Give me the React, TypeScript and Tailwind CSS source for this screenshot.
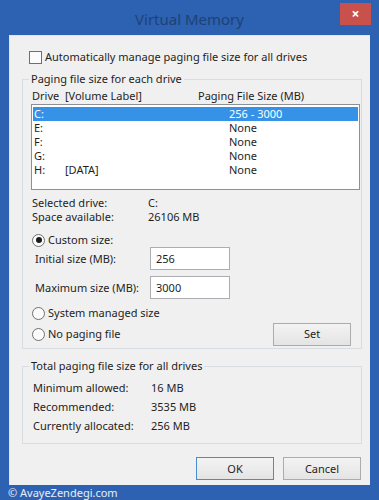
import React from 'react';

const font = { fontFamily: '"Noto Sans", "Open Sans", sans-serif' };

function Check() {
	return <div className="w-[13px] h-[13px] border border-[#6f6f6f] bg-[#fbfbfb]" />;
}

function Radio({ checked, label }: { checked?: boolean; label: string }) {
	return (
		<div className="flex items-center gap-[3px] h-[14px] ml-[9px]">
			<div className="w-[13px] h-[13px] rounded-full border border-[#6f6f6f] bg-[#fbfbfb] flex items-center justify-center">
				{checked && <div className="w-[6px] h-[6px] rounded-full bg-[#1b1b1b]" />}
			</div>
			<span>{label}</span>
		</div>
	);
}

function SizeInput({ label, value }: { label: string; value: string }) {
	return (
		<div className="flex items-center ml-[12px]">
			<span className="w-[115px]">{label}</span>
			<div className="w-[80px] h-[23px] border border-[#abadb3] bg-white pl-[5px] flex items-center">
				{value}
			</div>
		</div>
	);
}

function Btn({ label, main }: { label: string; main?: boolean }) {
	return (
		<div
			className={
				'w-[78px] h-[23px] flex items-center justify-center bg-gradient-to-b from-[#f3f3f3] to-[#e4e4e4] border ' +
				(main ? 'border-[#4a8ccc]' : 'border-[#acacac]')
			}
		>
			{label}
		</div>
	);
}

const drives = [
	{ d: 'C:', label: '', size: '256 - 3000' },
	{ d: 'E:', label: '', size: 'None' },
	{ d: 'F:', label: '', size: 'None' },
	{ d: 'G:', label: '', size: 'None' },
	{ d: 'H:', label: '[DATA]', size: 'None' },
];

export default function App() {
	return (
		<div
			className="w-[379px] h-[500px] bg-[#2c62b1] flex flex-col text-[11px] leading-[16px] text-[#1e1e1e]"
			style={font}
		>
			{/* 타이틀바 */}
			<div className="h-[35px] relative flex items-center justify-center">
				<span className="text-[15px] text-[#1f4176] mt-[2px]">Virtual Memory</span>
				<div className="absolute left-[340px] top-[3px] w-[31px] h-[22px] bg-[#c9514b] flex items-center justify-center text-white text-[14px] font-bold">
					×
				</div>
			</div>

			{/* 본문 */}
			<div className="ml-[9px] w-[361px] h-[450px] bg-[#f0f0f0] border-t border-l border-[#dfe6ee] flex flex-col">
				<div className="flex items-center gap-[3px] ml-[19px] mt-[13px] h-[16px]">
					<Check />
					<span>Automatically manage paging file size for all drives</span>
				</div>

				<fieldset className="ml-[12px] w-[340px] mt-[6px] border border-[#d8dde2] pb-[3px]">
					<legend className="ml-[6px] px-[2px]">Paging file size for each drive</legend>
					<div className="flex mt-[1px] ml-[9px] h-[16px]">
						<span className="w-[166px]">Drive&nbsp; [Volume Label]</span>
						<span>Paging File Size (MB)</span>
					</div>
					<div className="ml-[8px] w-[329px] h-[86px] bg-white border border-[#8d9197] px-[1px] pt-[2px] leading-[14px]">
						{drives.map((r, i) => (
							<div
								key={r.d}
								className={
									'flex h-[14px] pl-[1px] ' + (i === 0 ? 'bg-[#3592e6] text-white' : '')
								}
							>
								<span className="w-[31px]">{r.d}</span>
								<span className="w-[164px]">{r.label}</span>
								<span>{r.size}</span>
							</div>
						))}
					</div>

					<div className="mt-[6px] ml-[9px] leading-[14px]">
						<div className="flex">
							<span className="w-[116px]">Selected drive:</span>
							<span>C:</span>
						</div>
						<div className="flex">
							<span className="w-[116px]">Space available:</span>
							<span>26106 MB</span>
						</div>
					</div>

					<div className="mt-[9px] flex flex-col">
						<Radio checked label="Custom size:" />
						<SizeInput label="Initial size (MB):" value="256" />
						<div className="mt-[6px]">
							<SizeInput label="Maximum size (MB):" value="3000" />
						</div>
						<div className="mt-[7px]">
							<Radio label="System managed size" />
						</div>
						<div className="mt-[3px] flex items-center justify-between h-[22px] mr-[10px]">
							<Radio label="No paging file" />
							<Btn label="Set" />
						</div>
					</div>
				</fieldset>

				<fieldset className="ml-[12px] w-[340px] mt-[9px] border border-[#d8dde2] pb-[8px]">
					<legend className="ml-[6px] px-[2px]">Total paging file size for all drives</legend>
					<div className="mt-[4px] ml-[10px] leading-[19px]">
						<div className="flex">
							<span className="w-[118px]">Minimum allowed:</span>
							<span>16 MB</span>
						</div>
						<div className="flex">
							<span className="w-[118px]">Recommended:</span>
							<span>3535 MB</span>
						</div>
						<div className="flex">
							<span className="w-[118px]">Currently allocated:</span>
							<span>256 MB</span>
						</div>
					</div>
				</fieldset>

				<div className="flex justify-end gap-[9px] mt-[13px] mr-[9px]">
					<Btn label="OK" main />
					<Btn label="Cancel" />
				</div>
			</div>

			{/* 워터마크 */}
			<div className="ml-[8px] text-[11px] text-white/90 leading-[14px] mt-[1px]">© AvayeZendegi.com</div>
		</div>
	);
}
